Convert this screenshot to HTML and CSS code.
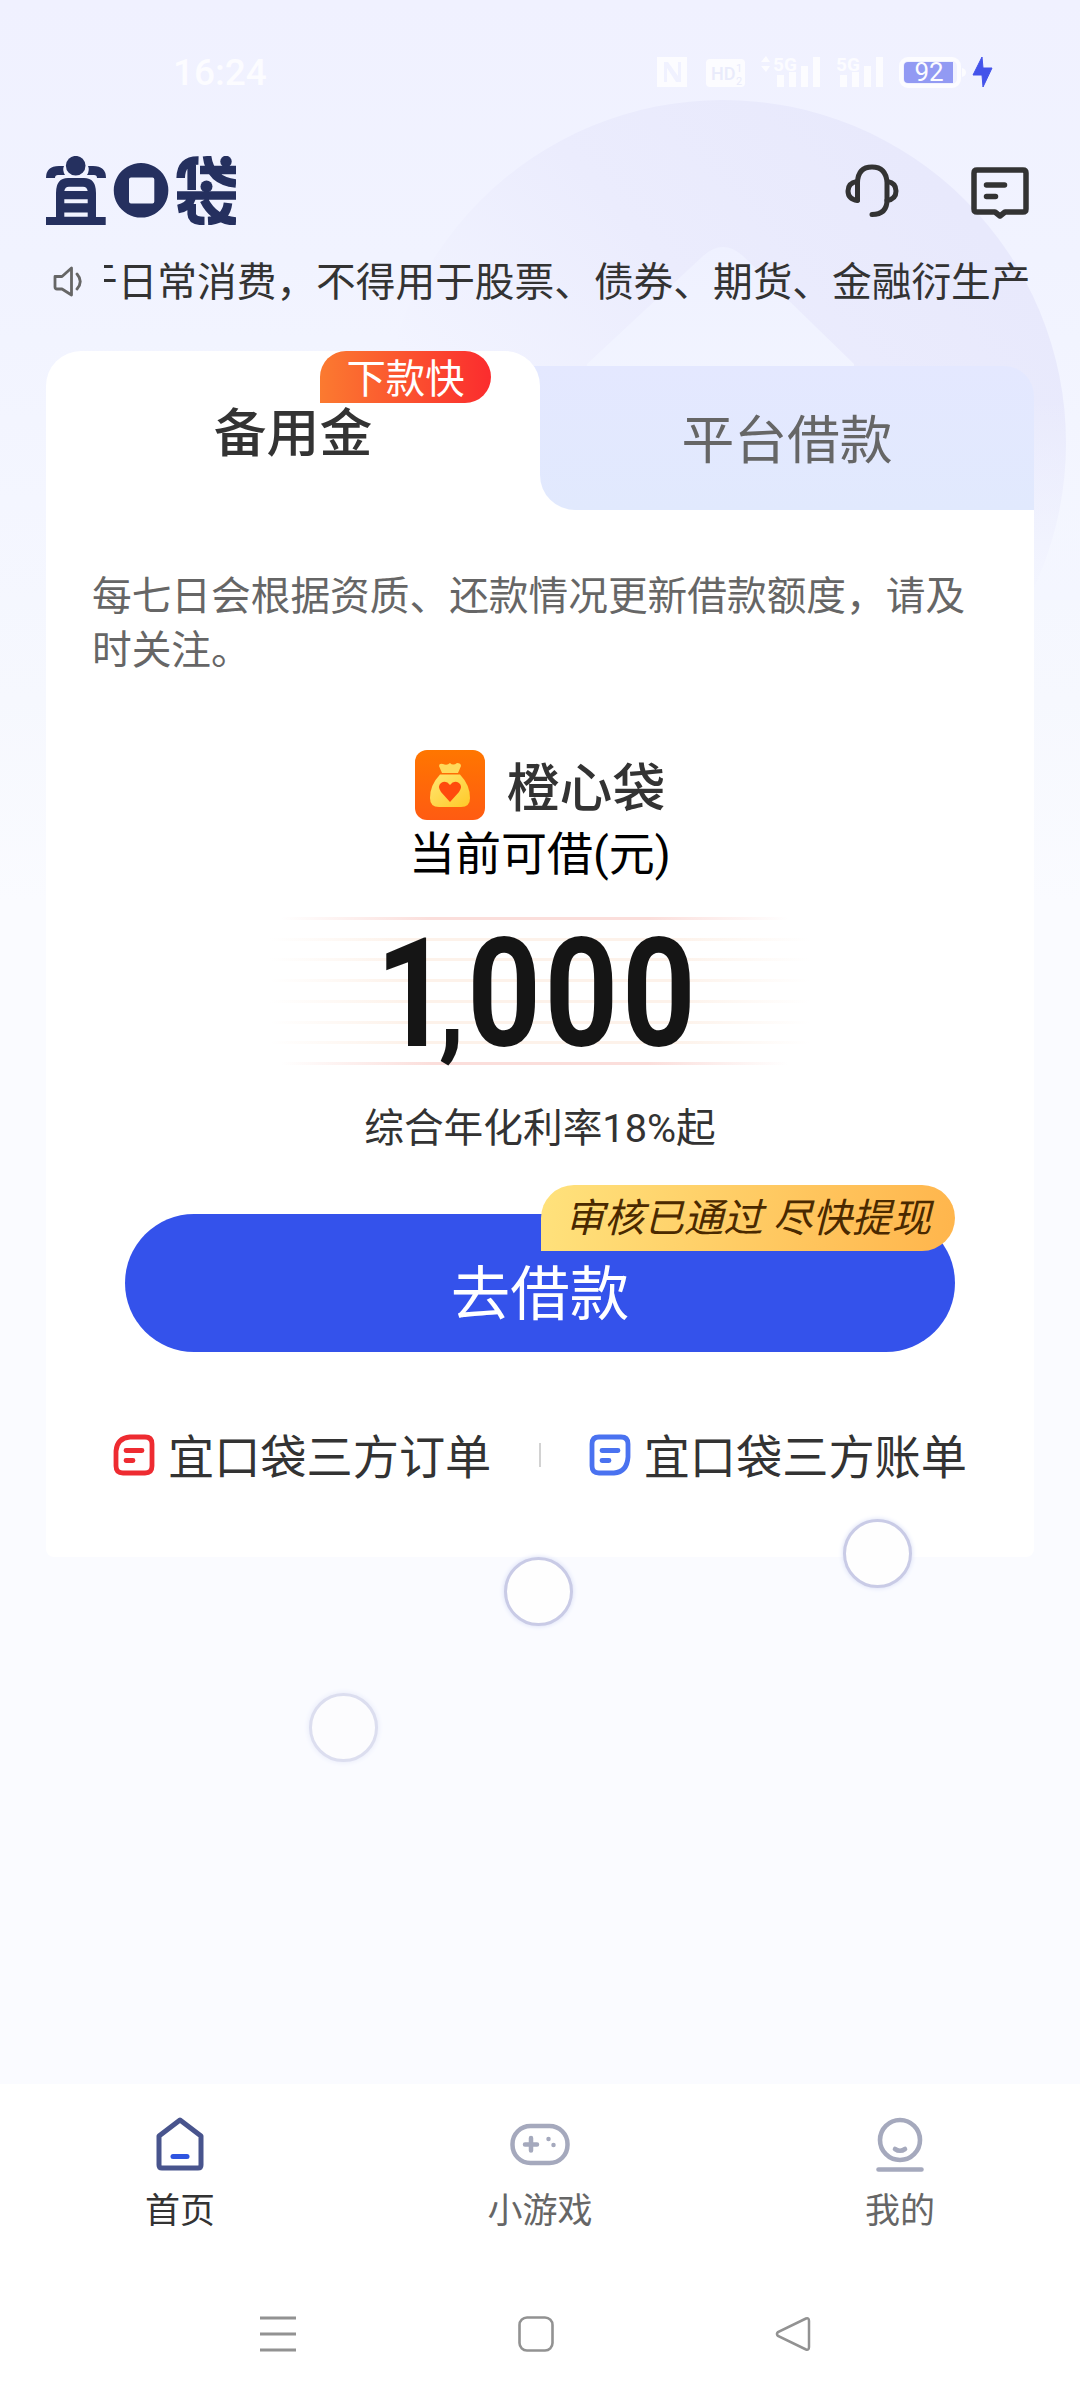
FILE: index.html
```html
<!DOCTYPE html>
<html lang="zh-CN">
<head>
<meta charset="utf-8">
<title>宜口袋</title>
<link rel="stylesheet" href="styles.css">
</head>
<body>
<div class="screen">
  <svg class="backdrop" width="1080" height="900" viewBox="0 0 1080 900" aria-hidden="true">
    <defs>
      <linearGradient id="disc" x1="0.75" y1="0.05" x2="0.2" y2="0.55">
        <stop offset="0" stop-color="#e8e9fc"/>
        <stop offset="0.5" stop-color="#ebecfd"/>
        <stop offset="1" stop-color="#f2f4ff"/>
      </linearGradient>
      <linearGradient id="peak" x1="0" y1="0" x2="0" y2="1">
        <stop offset="0" stop-color="#eff1ff"/>
        <stop offset="1" stop-color="#f4f7ff"/>
      </linearGradient>
      <linearGradient id="sink" x1="0" y1="0" x2="0" y2="1">
        <stop offset="0" stop-color="#f3f6ff" stop-opacity="0"/>
        <stop offset="1" stop-color="#f4f6ff"/>
      </linearGradient>
    </defs>
    <circle cx="723" cy="443" r="343" fill="url(#disc)"/>
    <path d="M587 364 703 256Q723 238 743 256L854 364V500H587Z" fill="url(#peak)"/>
    <rect x="1030" y="400" width="50" height="200" fill="url(#sink)"/>
  </svg>

  <div class="status">
    <span class="clock">16:24</span>
    <svg width="360" height="50" viewBox="0 0 360 50" fill="#fcfcff">
      <path fill-rule="evenodd" d="M3 13H33V43H3ZM10 18V38H13V24L22 38H27V18H24V32L14 18Z"/>
      <path fill-rule="evenodd" d="M56 15H87Q91 15 91 19V39Q91 43 87 43H56Q52 43 52 39V19Q52 15 56 15Z"/>
      <text class="st-hd" x="57" y="36">HD</text>
      <text class="st-tiny" x="82" y="28">1</text><text class="st-tiny" x="82" y="41">2</text>
      <path d="M107 18 112 12 116 18ZM107 22 112 28 116 22Z"/>
      <text class="st-net" x="119" y="27">5G</text>
      <path d="M123 31h7v12h-7zM135 28h7v15h-7zM147 22h7v21h-7zM159 13h7v30h-7z"/>
      <text class="st-net" x="182" y="27">5G</text>
      <path d="M186 31h7v12h-7zM198 28h7v15h-7zM210 22h7v21h-7zM222 13h7v30h-7z"/>
      <rect x="247" y="15" width="58" height="27" rx="7" fill="none" stroke="#fcfcff" stroke-width="4"/>
      <path d="M308 24q4 1 4 4.500t-4 4.500z"/>
      <path d="M254 18H299V39H254Q250 39 250 35V22Q250 18 254 18Z" fill="#929af3"/>
      <text class="st-bat" x="275" y="37">92</text>
      <path d="M328 13 319 31H328L329 43 338 24H329Z" fill="#4453ea" stroke="#4453ea" stroke-linejoin="round"/>
    </svg>
  </div>

  <header class="header">
    <svg class="logo" role="img" aria-label="宜口袋" width="190" height="69" viewBox="0 0 190 69" fill="#25305f">
      <circle cx="29.700" cy="9.700" r="9.800"/>
      <path d="M0 22Q0 10 13 10H18Q16 14 19 19H12Q9 19 9 22ZM60 22Q60 10 47 10H42Q44 14 41 19H48Q51 19 51 22Z"/>
      <path fill-rule="evenodd" d="M0 61H10V37Q10 22 22 22H38Q50 22 50 37V61H59.700V69H0ZM18.300 35H41.700Q41 30.700 37 30.700H23Q19 30.700 18.300 35ZM18.300 43.300V47.300H41.700V43.300ZM18.300 56.500V60.700H41.700V56.500Z"/>
      <path fill-rule="evenodd" d="M95 7a27.300 27.300 0 1 0 .1 0ZM85 21.500H106.500Q108.300 21.500 108.300 23.500V45.500Q108.300 47.500 106.500 47.500H85Q83 47.500 83 45.500V23.500Q83 21.500 85 21.500Z"/>
      <circle cx="180" cy="5.500" r="5.700"/>
      <circle cx="160.500" cy="30.500" r="6"/>
      <g fill="none" stroke="#25305f" stroke-width="8.600">
        <path d="M134.700 22Q135 4 152.500 4.500M145.700 8V34M154 14H190M161 0Q164 25 190 27.500M131 39.500H190M132 53Q143 51 145.500 42M145.700 48V58Q146 65 158.500 65M158 44Q168 64 190 65.500M182 47Q180 64 162 65"/>
      </g>
    </svg>
    <div class="header-actions">
      <svg width="54" height="54" viewBox="0 0 54 54" fill="none" stroke="#333" stroke-width="5" stroke-linecap="round">
        <path d="M12.500 36V18.500Q13 3 27 3T42 18.500V36Q42 50.500 27 50.500"/>
        <path d="M12 17.500Q3 19 3 27T12.500 36.500M42.500 17.500Q51 19 51 27T42 36.500"/>
      </svg>
      <svg width="58" height="52" viewBox="0 0 58 52" fill="none" stroke="#333" stroke-width="5.500" stroke-linecap="round" stroke-linejoin="round">
        <path d="M6 3H52Q55 3 55 6V42Q55 45 52 45H34L29 49 24 45H6Q3 45 3 42V6Q3 3 6 3Z"/>
        <path d="M15.500 18H33.500M15.500 29.500H24.500"/>
      </svg>
    </div>
  </header>

  <div class="notice">
    <svg width="31" height="31" viewBox="0 0 31 31" fill="none" stroke="#666" stroke-width="2.800" stroke-linejoin="round" stroke-linecap="round">
      <path d="M2 10.500H9L18.500 2V29L9 23H4Q2 23 2 21ZM24 8Q30.500 15.500 24 23"/>
    </svg>
    <div class="ticker"><span>于日常消费，不得用于股票、债券、期货、金融衍生产</span></div>
  </div>

  <main class="card">
    <div class="tabs">
      <div class="tab tab-active">备用金<span class="tag">下款快</span></div>
      <div class="tab-slot"><div class="tab tab-idle">平台借款</div></div>
    </div>
    <section class="panel">
      <p class="tip">每七日会根据资质、还款情况更新借款额度，请及时关注。</p>
      <div class="product">
        <svg width="70" height="70" viewBox="0 0 70 70">
          <defs>
            <linearGradient id="tile" x1="0" y1="0" x2="0" y2="1"><stop offset="0" stop-color="#ff7600"/><stop offset="1" stop-color="#ff5b12"/></linearGradient>
            <linearGradient id="bag" x1="0" y1="0" x2="1" y2="1"><stop offset="0" stop-color="#ffe672"/><stop offset="1" stop-color="#ffc928"/></linearGradient>
          </defs>
          <rect width="70" height="70" rx="12" fill="url(#tile)"/>
          <path d="M27 23 24 16Q24 13 28 14 32 16 35 13 38 16 42 13 46 13 46 16L43 23Z" fill="#ffd95a"/>
          <path d="M25 24.500H45Q55 35 55 48 55 57 46 57H24Q15 57 15 48 15 35 25 24.500Z" fill="url(#bag)"/>
          <path d="M35 52 26 42Q22 36 26 33 31 29.500 35 35 39 29.500 44 33 48 36 44 42Z" fill="#ff4a0d"/>
        </svg>
        <h1>橙心袋</h1>
      </div>
      <div class="quota-label">当前可借(元)</div>
      <div class="quota">
        <div class="stripes"><i></i><i></i><i></i><i></i><i></i><i></i><i></i><i></i></div>
        <div class="amount"><span>1</span><span class="comma">,</span><span class="zeros">000</span></div>
      </div>
      <div class="rate">综合年化利率18%起</div>
      <button class="cta">去借款<span class="cta-tag">审核已通过 尽快提现</span></button>
      <div class="links">
        <a class="link">
          <svg width="42" height="42" viewBox="0 0 42 42" fill="none" stroke="#ee2b31" stroke-width="4.800" stroke-linecap="round">
            <path d="M17 3H32Q39 3 39 10V32Q39 39 32 39H10Q3 39 3 32V17Q4 4 17 3Z"/><path d="M13 16.500H29M13 26.500H20"/>
          </svg>
          <span>宜口袋三方订单</span>
        </a>
        <i class="divider"></i>
        <a class="link">
          <svg width="42" height="42" viewBox="0 0 42 42" fill="none" stroke="#4a72f0" stroke-width="4.800" stroke-linecap="round">
            <path d="M10 3H32Q39 3 39 10V23Q38 38 25 39H10Q3 39 3 32V10Q3 3 10 3Z"/><path d="M13 16.500H29M13 26.500H20"/>
          </svg>
          <span>宜口袋三方账单</span>
        </a>
      </div>
    </section>
  </main>

  <footer class="dock">
    <nav class="nav">
      <a class="nav-item nav-on">
        <svg width="60" height="58" viewBox="0 0 60 58" fill="none" stroke="#48548d" stroke-width="5" stroke-linejoin="round">
          <path d="M9 21 30 5 51 21V50Q51 53 48 53H12Q9 53 9 50Z"/><path d="M23 41.500H37" stroke="#2f55e0" stroke-linecap="round"/>
        </svg>
        <span>首页</span>
      </a>
      <a class="nav-item">
        <svg width="60" height="58" viewBox="0 0 60 58" fill="none" stroke="#a5a9bd" stroke-width="4.500" stroke-linecap="round">
          <rect x="2.500" y="11" width="55" height="37" rx="18"/><path d="M21 23V35.500M15 29.500H27"/>
          <path d="M38.500 24v.1M43.500 30v.1"/>
        </svg>
        <span>小游戏</span>
      </a>
      <a class="nav-item">
        <svg width="60" height="58" viewBox="0 0 60 58" fill="none" stroke="#a5a9bd" stroke-width="4.600" stroke-linecap="round">
          <circle cx="30" cy="25" r="20"/><path d="M25 34Q30 37.500 35 34M8.500 54.500H51.500"/>
        </svg>
        <span>我的</span>
      </a>
    </nav>
    <div class="sysnav">
      <svg width="36" height="36" viewBox="0 0 36 36" stroke="#929292" stroke-width="2.800"><path d="M0 2H36M0 18H36M0 34H36"/></svg>
      <svg width="36" height="36" viewBox="0 0 36 36" fill="none" stroke="#929292" stroke-width="2.600"><rect x="1.500" y="1.500" width="33" height="33" rx="7.500"/></svg>
      <svg width="36" height="36" viewBox="0 0 36 36" fill="none" stroke="#929292" stroke-width="2.500"><path d="M31 2.500 3 16Q1 18 3 20L31 33.500Q34 34.500 34 31V5Q34 1.500 31 2.500Z"/></svg>
    </div>
  </footer>

  <i class="touch touch-a"></i>
  <i class="touch touch-b"></i>
  <i class="touch touch-c"></i>
</div>
</body>
</html>
```
FILE: styles.css
```css
* { box-sizing: border-box; }
body { margin: 0; }
.screen {
  position: relative;
  display: flex;
  flex-direction: column;
  width: 1080px;
  height: 2400px;
  overflow: hidden;
  background: linear-gradient(#f0f1ff 0, #f1f3ff 260px, #f4f6ff 500px, #f6f8fe 700px, #fafbff 902px);
  font-family: Roboto, "Noto Sans CJK SC", sans-serif;
  color: #333;
}
.screen > * { position: relative; flex: none; }
.screen > .backdrop { position: absolute; left: 0; top: 0; }
svg { display: block; flex: none; }

.status { display: flex; justify-content: space-between; align-items: center; height: 146px; padding: 0 66px 0 173px; color: #fcfcff; }
.clock { font-size: 37px; line-height: 50px; font-weight: 500; }
.status svg { margin-top: -8px; }
.st-hd { font-size: 18px; font-weight: 500; fill: #e9ebfb; }
.st-tiny { font-size: 11px; fill: #e9ebfb; }
.st-net { font-size: 19px; font-weight: 700; }
.st-bat { font-size: 26px; text-anchor: middle; font-weight: 400; }

.header { display: flex; justify-content: space-between; align-items: center; height: 89px; padding: 0 51px 0 46px; }
.header-actions { display: flex; align-items: center; gap: 72px; }
.header-actions svg { margin-top: 1px; }
.header-actions svg:last-child { margin-top: 4px; }

.notice { display: flex; align-items: center; gap: 20px; height: 93px; padding: 0 50px 0 53px; }
.ticker { display: flex; width: 926px; overflow: hidden; padding-top: 2px; font-size: 39.700px; line-height: 56px; white-space: nowrap; }
.ticker span { margin-left: -26px; }

.card { margin: 23px 46px 0; }
.tabs {
  display: grid;
  grid-template-columns: 1fr 1fr;
  height: 159px;
  background: linear-gradient(#e3e8ff, #e3e8ff) 454px 15px / 50px 40px no-repeat;
}
.tab { display: flex; align-items: center; justify-content: center; font-size: 52.800px; line-height: 70px; }
.tab-active { position: relative; background: #fff; border-radius: 35px 35px 0 0; font-weight: 500; padding-top: 7px; }
.tab-slot { display: grid; margin-top: 15px; background: linear-gradient(#fff, #fff) 0 100% / 60px 60px no-repeat; }
.tab-idle { background: linear-gradient(#e4e8ff, #e1e9fd); border-radius: 0 30px 0 35px; color: #666; padding-top: 6px; }
.tag {
  position: absolute;
  left: 274px;
  top: 0;
  width: 171px;
  height: 52px;
  border-radius: 26px 26px 26px 0;
  background: linear-gradient(90deg, #fb7a30, #fb2c2e);
  color: #fff;
  font-size: 39.400px;
  font-weight: 400;
  line-height: 58px;
  text-align: center;
}

.panel { display: flex; flex-direction: column; align-items: center; height: 1047px; padding-top: 60px; background: #fff; border-radius: 0 0 8px 8px; }
.tip { width: 896px; margin: 0; font-size: 39.700px; line-height: 53.500px; color: #666; }
.product { display: flex; align-items: center; gap: 22px; height: 70px; margin-top: 73px; }
.product h1 { margin: 0; padding-top: 7px; font-size: 52.800px; line-height: 70px; font-weight: 500; }
.quota-label { margin-top: 4px; font-size: 46px; line-height: 60px; color: #000; }
.quota { display: grid; width: 540px; height: 148px; margin-top: 33px; }
.stripes, .amount { grid-area: 1 / 1; }
.stripes { display: flex; flex-direction: column; justify-content: space-between; }
.stripes i { height: 3px; background: linear-gradient(90deg, transparent, #fdf2ea 25%, #fdf2ea 75%, transparent); }
.stripes i:first-child, .stripes i:last-child { background: linear-gradient(90deg, transparent 2%, #fbdedb 30%, #fbdedb 70%, transparent 96%); }
.amount { display: flex; height: 148px; padding: 3px 0 0 126px; color: #151515; font-size: 153px; line-height: 148px; font-weight: 700; transform: scaleX(.84); transform-origin: 0 0; }
.amount .comma { width: 38px; margin: 0 -4px 0 -13px; padding-top: 8px; font-size: 124px; }
.amount .zeros { letter-spacing: 4.300px; }
.rate { margin-top: 36px; font-size: 39.700px; line-height: 56px; }
.cta {
  position: relative;
  width: 830px;
  height: 138px;
  margin: 57px 0 0;
  padding: 23px 0 0;
  border: 0;
  border-radius: 69px;
  background: #3452eb;
  color: #fff;
  font: 59.500px/80px Roboto, "Noto Sans CJK SC", sans-serif;
}
.cta-tag {
  position: absolute;
  right: 0;
  top: -29px;
  width: 414px;
  height: 66px;
  border-radius: 33px 33px 33px 0;
  background: linear-gradient(100deg, #ffe27c, #ffb54c);
  color: #4a2900;
  font-size: 39.600px;
  font-style: italic;
  line-height: 68px;
  white-space: nowrap;
}
.links { display: flex; align-items: center; justify-content: space-between; width: 854px; height: 60px; margin-top: 73px; }
.link { display: flex; align-items: center; gap: 13px; font-size: 46.200px; line-height: 60px; }
.link span { padding-top: 5px; }
.divider { width: 2px; height: 24px; background: #d2d2d2; }

.dock { margin-top: auto; height: 316px; background: #fff; }
.nav { display: grid; grid-template-columns: repeat(3, 1fr); justify-items: center; padding-top: 31px; }
.nav-item { display: flex; flex-direction: column; align-items: center; gap: 14px; font-size: 35px; line-height: 50px; color: #666; }
.nav-on { color: #333; }
.sysnav { display: flex; justify-content: space-between; padding: 79px 269px 0 260px; }

.screen > .touch { position: absolute; width: 69px; height: 69px; border: 3px solid #c9cbe6; border-radius: 50%; background: #fefefe; box-shadow: 0 0 5px #d5dbf5; }
.screen > .touch-a { left: 504px; top: 1557px; }
.screen > .touch-b { left: 843px; top: 1519px; }
.screen > .touch-c { left: 309px; top: 1693px; opacity: .6; }
```
